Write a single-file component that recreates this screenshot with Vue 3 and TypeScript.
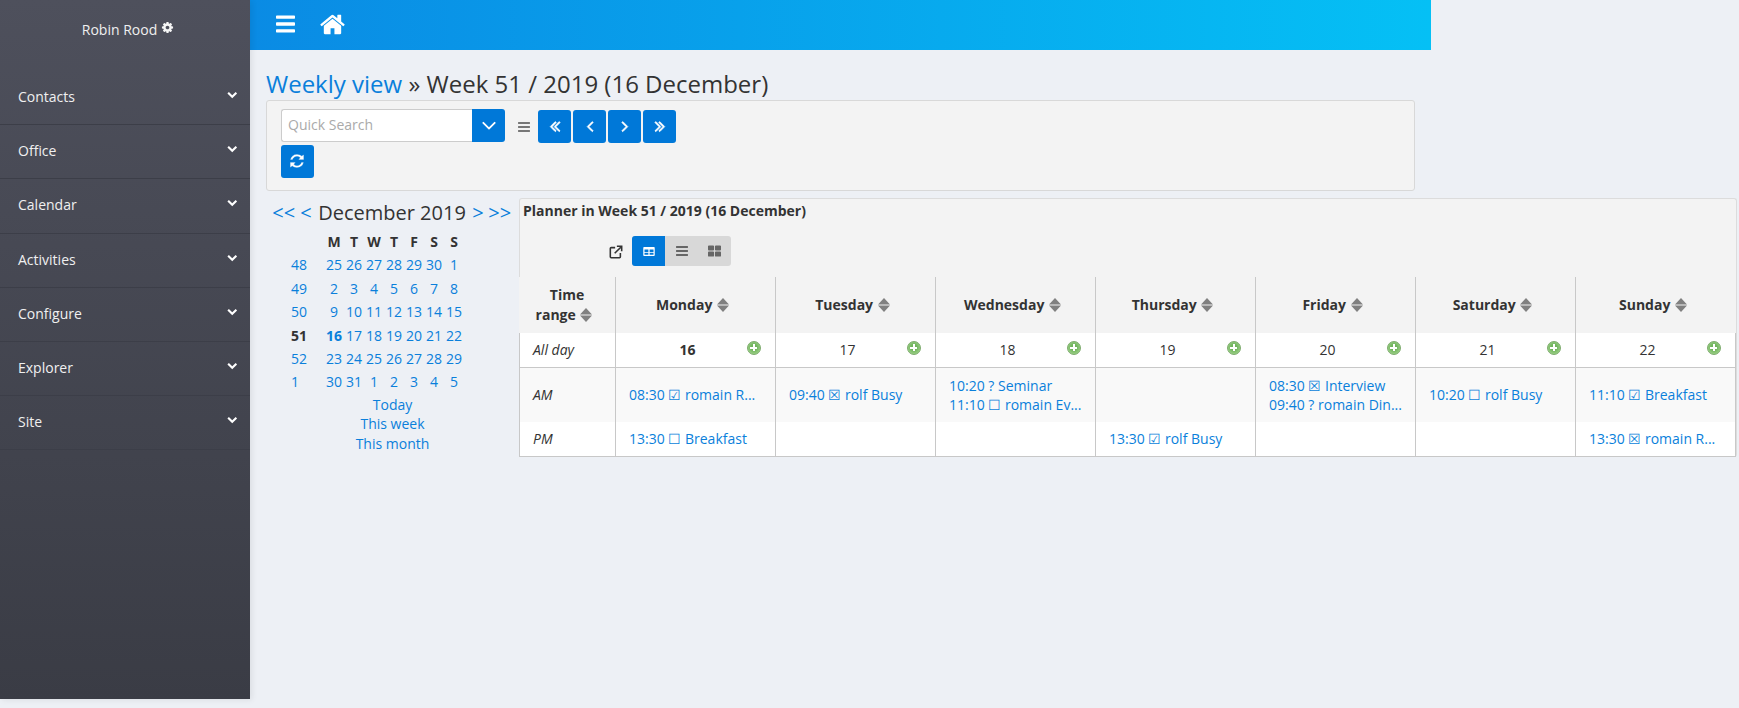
<script setup lang="ts">
const P: Record<string, string> = {
  bars: 'M1536 1344v128q0 26-19 45t-45 19h-1408q-26 0-45-19t-19-45v-128q0-26 19-45t45-19h1408q26 0 45 19t19 45zm0-512v128q0 26-19 45t-45 19h-1408q-26 0-45-19t-19-45v-128q0-26 19-45t45-19h1408q26 0 45 19t19 45zm0-512v128q0 26-19 45t-45 19h-1408q-26 0-45-19t-19-45v-128q0-26 19-45t45-19h1408q26 0 45 19t19 45z',
  home: 'M1472 992v480q0 26-19 45t-45 19h-384v-384h-256v384h-384q-26 0-45-19t-19-45v-480q0-1 .5-3t.5-3l575-474 575 474q1 2 1 6zm223-69l-62 74q-8 9-21 11h-3q-13 0-21-7l-692-577-692 577q-12 8-24 7-13-2-21-11l-62-74q-8-10-7-23.5t11-20.5l719-599q32-26 76-26t76 26l244 204v-195q0-14 9-23t23-9h192q14 0 23 9t9 23v408l219 182q10 8 11 21.5t-7 23.5z',
  chevron: 'M1683 808l-742 741q-19 19-45 19t-45-19l-742-741q-19-19-19-45.5t19-45.5l166-165q19-19 45-19t45 19l531 531 531-531q19-19 45-19t45 19l166 165q19 19 19 45.5t-19 45.5z',
  angledown: 'M1395 736q0 13-10 23l-466 466q-10 10-23 10t-23-10l-466-466q-10-10-10-23t10-23l50-50q10-10 23-10t23 10l393 393 393-393q10-10 23-10t23 10l50 50q10 10 10 23z',
  cog: 'M1152 896q0-106-75-181t-181-75-181 75-75 181 75 181 181 75 181-75 75-181zm512-109v222q0 12-8 23t-20 13l-185 28q-19 54-39 91 35 50 107 138 10 12 10 25t-9 23q-27 37-99 108t-94 71q-12 0-26-9l-138-108q-44 23-91 38-16 136-29 186-7 28-36 28h-222q-14 0-24.5-8.5t-11.5-21.5l-28-184q-49-16-90-37l-141 107q-10 9-25 9-14 0-25-11-126-114-165-168-7-10-7-23 0-12 8-23 15-21 51-66.5t54-70.5q-27-50-41-99l-183-27q-13-2-21-12.5t-8-23.5v-222q0-12 8-23t19-13l186-28q14-46 39-92-40-57-107-138-10-12-10-24 0-10 9-23 26-36 98.5-107.5t94.5-71.5q13 0 26 10l138 107q44-23 91-38 16-136 29-186 7-28 36-28h222q14 0 24.5 8.5t11.5 21.5l28 184q49 16 90 37l142-107q9-9 24-9 13 0 25 10 129 119 165 170 7 8 7 22 0 12-8 23-15 21-51 66.5t-54 70.5q26 50 41 98l183 28q13 2 21 12.5t8 23.5z',
  refresh: 'M1639 1056q0 5-1 7-64 268-268 434.5t-478 166.5q-146 0-282.5-55t-243.5-157l-129 129q-19 19-45 19t-45-19-19-45v-448q0-26 19-45t45-19h448q26 0 45 19t19 45-19 45l-137 137q71 66 161 102t187 36q134 0 250-65t186-179q11-17 53-117 8-23 30-23h192q13 0 22.5 9.5t9.5 22.5zm25-800v448q0 26-19 45t-45 19h-448q-26 0-45-19t-19-45 19-45l138-138q-148-137-349-137-134 0-250 65t-186 179q-11 17-53 117-8 23-30 23h-199q-13 0-22.5-9.5t-9.5-22.5v-7q65-268 270-434.5t480-166.5q146 0 284 55.5t245 156.5l130-129q19-19 45-19t45 19 19 45z',
  left: 'M1203 544q0 13-10 23l-393 393 393 393q10 10 10 23t-10 23l-50 50q-10 10-23 10t-23-10l-466-466q-10-10-10-23t10-23l466-466q10-10 23-10t23 10l50 50q10 10 10 23z',
  right: 'M1171 960q0 13-10 23l-466 466q-10 10-23 10t-23-10l-50-50q-10-10-10-23t10-23l393-393-393-393q-10-10-10-23t10-23l50-50q10-10 23-10t23 10l466 466q10 10 10 23z',
  dleft: 'M1011 1376q0 13-10 23l-50 50q-10 10-23 10t-23-10l-466-466q-10-10-10-23t10-23l466-466q10-10 23-10t23 10l50 50q10 10 10 23t-10 23l-393 393 393 393q10 10 10 23zm384 0q0 13-10 23l-50 50q-10 10-23 10t-23-10l-466-466q-10-10-10-23t10-23l466-466q10-10 23-10t23 10l50 50q10 10 10 23t-10 23l-393 393 393 393q10 10 10 23z',
  dright: 'M979 960q0 13-10 23l-466 466q-10 10-23 10t-23-10l-50-50q-10-10-10-23t10-23l393-393-393-393q-10-10-10-23t10-23l50-50q10-10 23-10t23 10l466 466q10 10 10 23zm384 0q0 13-10 23l-466 466q-10 10-23 10t-23-10l-50-50q-10-10-10-23t10-23l393-393-393-393q-10-10-10-23t10-23l50-50q10-10 23-10t23 10l466 466q10 10 10 23z',
}
const menu = ['Contacts', 'Office', 'Calendar', 'Activities', 'Configure', 'Explorer', 'Site']
const navIcons = ['dleft', 'left', 'right', 'dright']
const dow = ['M', 'T', 'W', 'T', 'F', 'S', 'S']
const weeks: [string, string[]][] = [
  ['48', ['25', '26', '27', '28', '29', '30', '1']],
  ['49', ['2', '3', '4', '5', '6', '7', '8']],
  ['50', ['9', '10', '11', '12', '13', '14', '15']],
  ['51', ['16', '17', '18', '19', '20', '21', '22']],
  ['52', ['23', '24', '25', '26', '27', '28', '29']],
  ['1', ['30', '31', '1', '2', '3', '4', '5']],
]
const days = [
  { name: 'Monday', num: '16', am: ['08:30 ☑ romain R...'], pm: ['13:30 ☐ Breakfast'] },
  { name: 'Tuesday', num: '17', am: ['09:40 ☒ rolf Busy'], pm: [] },
  { name: 'Wednesday', num: '18', am: ['10:20 ? Seminar', '11:10 ☐ romain Ev...'], pm: [] },
  { name: 'Thursday', num: '19', am: [], pm: ['13:30 ☑ rolf Busy'] },
  { name: 'Friday', num: '20', am: ['08:30 ☒ Interview', '09:40 ? romain Din...'], pm: [] },
  { name: 'Saturday', num: '21', am: ['10:20 ☐ rolf Busy'], pm: [] },
  { name: 'Sunday', num: '22', am: ['11:10 ☑ Breakfast'], pm: ['13:30 ☒ romain R...'] },
]
</script>

<template>
  <div class="page">
    <aside class="side">
      <div class="user">
        <span>Robin Rood</span>
        <svg class="cog" viewBox="0 0 1792 1792"><path :d="P.cog" /></svg>
      </div>
      <nav class="menu">
        <a v-for="m in menu" :key="m" class="item">
          <span>{{ m }}</span>
          <svg class="chev" viewBox="0 0 1792 1792"><path :d="P.chevron" /></svg>
        </a>
      </nav>
    </aside>

    <main class="main">
      <header class="top">
        <svg class="bars" viewBox="0 0 1536 1792" preserveAspectRatio="none"><path :d="P.bars" /></svg>
        <svg class="home" viewBox="0 0 1792 1792"><path :d="P.home" /></svg>
      </header>

      <div class="content">
        <h1 class="title"><a>Weekly view</a> » Week 51 / 2019 (16 December)</h1>

        <section class="toolbar">
          <div class="tool-row">
            <div class="search">
              <span class="ph">Quick Search</span>
              <span class="drop"><svg class="ic-chev" viewBox="0 0 1792 1792"><path :d="P.angledown" /></svg></span>
            </div>
            <svg class="lines" viewBox="0 0 1536 1792"><path :d="P.bars" /></svg>
            <div class="navs">
              <button v-for="n in navIcons" :key="n" class="btn">
                <svg class="ic-nav" viewBox="0 0 1792 1792"><path :d="P[n]" /></svg>
              </button>
            </div>
          </div>
          <button class="btn refresh">
            <svg class="ic-ref" viewBox="0 0 1792 1792"><path :d="P.refresh" /></svg>
          </button>
        </section>

        <div class="lower">
          <section class="cal">
            <div class="cal-title">
              <a class="t-first">&lt;&lt;</a><a>&lt;</a><span>December 2019</span><a>&gt;</a><a class="t-last">&gt;&gt;</a>
            </div>
            <div class="cal-grid">
              <span class="wk"></span>
              <b v-for="(d, i) in dow" :key="i" class="dh">{{ d }}</b>
              <template v-for="w in weeks" :key="w[0]">
                <a class="wk" :class="{ strong: w[0] === '51' }">{{ w[0] }}</a>
                <a v-for="(d, i) in w[1]" :key="i" class="dn" :class="{ today: d === '16' }">{{ d }}</a>
              </template>
            </div>
            <div class="cal-links">
              <a>Today</a><a>This week</a><a>This month</a>
            </div>
          </section>

          <section class="planner">
            <h2 class="p-title">Planner in Week 51 / 2019 (16 December)</h2>
            <div class="p-tools">
              <svg class="ext" viewBox="0 0 16 16">
                <path d="M7 3H2.500A1 1 0 0 0 1.500 4v9.500a1 1 0 0 0 1 1H12a1 1 0 0 0 1-1V9" fill="none" stroke="#333" stroke-width="1.800" />
                <path d="M6.500 9.500 13.500 2.500M9 1.500h5.500V7" fill="none" stroke="#333" stroke-width="1.800" />
              </svg>
              <div class="modes">
                <span class="mode on">
                  <svg viewBox="0 0 14 11" width="12" height="9"><path fill="#fff" fill-rule="evenodd" d="M1 0h12a1 1 0 0 1 1 1v9a1 1 0 0 1-1 1H1a1 1 0 0 1-1-1V1a1 1 0 0 1 1-1zm.500 3v3h4.750V3zm6.250 0v3h4.750V3zM1.500 7v2.500h4.750V7zm6.250 0v2.500h4.750V7z" /></svg>
                </span>
                <span class="mode">
                  <svg class="m-bars" viewBox="0 0 1536 1792"><path :d="P.bars" /></svg>
                </span>
                <span class="mode">
                  <svg viewBox="0 0 14 12" width="13" height="12"><path fill="#666" d="M0 1a1 1 0 0 1 1-1h4.500a1 1 0 0 1 1 1v3.500a1 1 0 0 1-1 1H1a1 1 0 0 1-1-1zM7.500 1a1 1 0 0 1 1-1H13a1 1 0 0 1 1 1v3.500a1 1 0 0 1-1 1H8.500a1 1 0 0 1-1-1zM0 7.500a1 1 0 0 1 1-1h4.500a1 1 0 0 1 1 1V11a1 1 0 0 1-1 1H1a1 1 0 0 1-1-1zM7.500 7.500a1 1 0 0 1 1-1H13a1 1 0 0 1 1 1V11a1 1 0 0 1-1 1H8.500a1 1 0 0 1-1-1z" /></svg>
                </span>
              </div>
            </div>

            <div class="table">
              <div class="cell th first">
                <span class="th-txt">Time<br />range <svg class="sort" viewBox="0 0 12 14"><path d="M6 0l6 6.400H0zM6 14l6-6.400H0z" /></svg></span>
              </div>
              <div v-for="d in days" :key="d.name" class="cell th">
                <span class="th-txt">{{ d.name }} <svg class="sort" viewBox="0 0 12 14"><path d="M6 0l6 6.400H0zM6 14l6-6.400H0z" /></svg></span>
              </div>

              <div class="cell allday first em">All day</div>
              <div v-for="d in days" :key="d.num" class="cell allday num">
                <span :class="{ cur: d.num === '16' }">{{ d.num }}</span>
                <span class="plus"></span>
              </div>

              <div class="cell am first em">AM</div>
              <div v-for="d in days" :key="d.name + 'am'" class="cell am ev">
                <a v-for="e in d.am" :key="e">{{ e }}</a>
              </div>

              <div class="cell pm first em">PM</div>
              <div v-for="d in days" :key="d.name + 'pm'" class="cell pm ev">
                <a v-for="e in d.pm" :key="e">{{ e }}</a>
              </div>
            </div>
          </section>
        </div>
      </div>
    </main>
  </div>
</template>

<style>
html, body { margin: 0; background: #edf0f5; overflow: hidden; }
</style>

<style scoped>
.page { display: flex; width: 1739px; height: 708px; overflow: hidden; font: 14px/20px "Open Sans", sans-serif; color: #333; background: #edf0f5; }
a { color: #0a7fdb; }
.side { flex: 0 0 250px; height: 699px; background: linear-gradient(#4e505c, #3a3c45); box-shadow: 2px 1px 6px rgba(0, 0, 0, .08); color: #f0f0f0; position: relative; z-index: 1; }
.user { height: 71px; box-sizing: border-box; padding-top: 20px; display: flex; justify-content: center; gap: 4px; padding-left: 6px; }
.cog { width: 13px; height: 13px; fill: #f6f6f6; margin-top: 1px; }
.item { display: flex; justify-content: space-between; height: 54.200px; box-sizing: border-box; padding: 16px 13px 0 18px; color: #f0f0f0; border-bottom: 1px solid #3c3e48; }
.chev { width: 10.500px; height: 10.500px; fill: #fff; margin-top: 2px; }

.main { flex: 0 0 1181px; min-width: 0; }
.top { height: 50px; width: 1181px; background: linear-gradient(90deg, #0a8be4, #05c0f5); display: flex; align-items: center; padding-left: 26px; box-sizing: border-box; gap: 24px; }
.bars { width: 19px; height: 24px; fill: #fff; margin-top: -3px; }
.home { width: 27px; height: 27px; fill: #fff; margin-top: -2px; }

.content { width: 1490px; padding-left: 16px; }
.title { margin: 0; padding-top: 18px; height: 32px; font-size: 24px; line-height: 31px; font-weight: 400; white-space: nowrap; }
.toolbar { width: 1149px; height: 91px; box-sizing: border-box; background: #f3f3f3; border: 1px solid #d8d8d8; border-radius: 3px; padding: 7px 14px; }
.tool-row { display: flex; align-items: center; }
.search { display: flex; width: 224px; height: 33px; box-sizing: border-box; }
.ph { flex: 1; background: #fff; border: 1px solid #ccc; border-right: 0; border-radius: 3px 0 0 3px; color: #aaa; padding: 5px 6px; line-height: 20px; box-sizing: border-box; }
.drop { width: 33px; background: #0078d8; border-radius: 0 3px 3px 0; display: flex; align-items: center; justify-content: center; }
.ic-chev { width: 24px; height: 24px; fill: #fff; flex: none; margin-top: -2px; }
.lines { width: 12px; height: 14px; fill: #777; margin: 2px 8px 0 13px; }
.navs { display: flex; gap: 2px; margin-top: 2px; }
.btn { width: 33px; height: 33px; padding: 0; border: 0; background: #0078d8; border-radius: 3px; display: flex; align-items: center; justify-content: center; }
.ic-nav { width: 18px; height: 18px; fill: #fff; stroke: #fff; stroke-width: 70; margin-top: -1px; flex: none; }
.refresh { margin-top: 2px; }
.ic-ref { width: 16px; height: 16px; fill: #fff; stroke: #0078d8; stroke-width: 40; margin-top: -1px; margin-left: -1px; }

.lower { display: flex; margin-top: 7px; align-items: flex-start; }
.cal { flex: 0 0 253px; text-align: center; padding-top: 1px; }
.cal-title { font-size: 20px; line-height: 28px; height: 28px; display: flex; justify-content: center; gap: 6.500px; white-space: nowrap; padding-right: 1.500px; }
.t-first { margin-right: -1.500px; }
.t-last { margin-left: -2px; }
.cal-grid { display: grid; grid-template-columns: 33px repeat(7, 20px); grid-auto-rows: 23.400px; justify-content: start; padding: 5px 0 0 25px; }
.cal-grid > .wk { text-align: left; }
.cal-grid > .dn, .dh { text-align: center; white-space: nowrap; }
.strong { font-weight: 700; color: #333; }
.today { font-weight: 700; }
.cal-links { display: flex; flex-direction: column; line-height: 19.500px; margin-top: -1px; }

.planner { flex: 0 0 1217px; box-sizing: border-box; background: #f3f3f3; border: 1px solid #dcdcdc; border-bottom: 0; border-radius: 3px; }
.p-title { margin: 0; font-size: 14px; line-height: 20px; font-weight: 700; padding: 2px 0 0 3px; height: 24px; box-sizing: border-box; }
.p-tools { height: 54px; box-sizing: border-box; padding: 13px 0 0 89px; display: flex; align-items: flex-start; gap: 9px; }
.ext { width: 14px; height: 14px; margin-top: 9px; }
.modes { display: flex; background: #d8d8d8; border-radius: 3px; overflow: hidden; height: 30px; }
.mode { width: 33px; display: flex; align-items: center; justify-content: center; }
.mode.on { background: #0078d8; }
.m-bars { width: 12px; height: 14px; fill: #666; }

.table { display: grid; grid-template-columns: 97px repeat(7, 160px); grid-template-rows: 56px 35px 54px 34px; margin-left: -1px; border-bottom: 1px solid #c8c8c8; width: 1217px; }
.cell { box-sizing: border-box; border-right: 1px solid #c8c8c8; }
.th:nth-child(8) { border-right: 0; }
.first:not(.th) { border-left: 1px solid #c8c8c8; padding-left: 13px; }
.th { display: flex; align-items: center; justify-content: center; background: #f3f3f3; font-weight: 700; text-align: center; }
.th-txt { display: block; }
.sort { display: inline-block; width: 12px; height: 14px; vertical-align: -2px; margin: 0 6px 0 1px; fill: #808080; }
.allday { background: #fff; border-bottom: 1px solid #c8c8c8; }
.am { background: #f9f9f9; padding-bottom: 1px; }
.pm { background: #fff; padding-bottom: 1px; }
.first { display: flex; align-items: center; }
.th.first { justify-content: center; }
.em { font-style: italic; }
.num { position: relative; display: flex; align-items: center; justify-content: center; padding-right: 16px; }
.cur { font-weight: 700; }
.plus { position: absolute; right: 14px; top: 7.500px; width: 14.500px; height: 14.500px; border-radius: 50%; border: 1px solid #7cab6c; box-sizing: border-box; background:
  linear-gradient(#fff, #fff) center / 7px 2px no-repeat,
  linear-gradient(#fff, #fff) center / 2px 7px no-repeat,
  radial-gradient(circle at 50% 45%, #6fb35c 30%, #a4d68e 85%); }
.ev { display: flex; flex-direction: column; justify-content: center; padding-left: 13px; line-height: 19px; white-space: nowrap; }
</style>
